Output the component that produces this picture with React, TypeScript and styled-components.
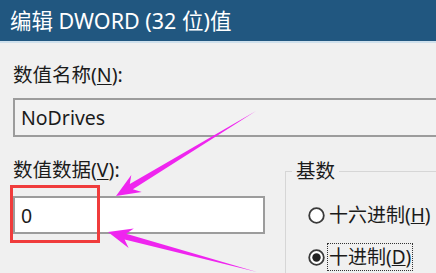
import React from 'react';
import styled, { createGlobalStyle } from 'styled-components';

const GlobalStyle = createGlobalStyle`
  html, body {
    margin: 0;
    padding: 0;
    background: #f0f0f0;
    overflow: hidden;
  }
`;

const Dialog = styled.div`
  position: relative;
  width: 436px;
  height: 273px;
  overflow: hidden;
  background: #f0f0f0;
  font-family: 'Noto Sans', 'Noto Sans CJK SC', sans-serif;
  color: #1b1b1b;
`;

const TitleBar = styled.div`
  height: 41px;
  display: flex;
  align-items: center;
  padding-left: 10px;
  background: #215780;
  color: #ffffff;
  font-size: 21.5px;
  line-height: 24px;
  white-space: nowrap;
  border-bottom: 2px solid #cfe0ec;
`;

const Content = styled.div`
  padding-left: 13px;
  width: 480px;
`;

const Label = styled.div<{ top: number }>`
  margin-top: ${p => p.top}px;
  font-size: 19.5px;
  line-height: 24px;
  white-space: nowrap;

  u {
    text-decoration: underline;
    text-underline-offset: 2px;
  }
`;

const TextField = styled.div<{ readOnly?: boolean; w: number; top: number }>`
  box-sizing: border-box;
  width: ${p => p.w}px;
  height: ${p => (p.readOnly ? 39 : 38)}px;
  margin-top: ${p => p.top}px;
  display: flex;
  align-items: center;
  padding-left: 6px;
  border: 2px solid #9c9c9c;
  background: ${p => (p.readOnly ? '#f2f2f2' : '#ffffff')};
  font-size: 19.5px;
  white-space: nowrap;
`;

const Row = styled.div`
  display: flex;
  align-items: flex-start;
`;

const Column = styled.div`
  display: flex;
  flex-direction: column;
`;

const GroupBox = styled.fieldset`
  margin: 24px 0 0 20px;
  padding: 0 0 20px 0;
  width: 200px;
  border: 1px solid #d6d6d6;
  border-right: none;
`;

const Legend = styled.legend`
  margin-left: 6px;
  padding: 0 4px;
  font-size: 19.5px;
  line-height: 20px;
`;

const RadioRow = styled.div<{ top: number }>`
  display: flex;
  align-items: center;
  gap: 2px;
  margin-top: ${p => p.top}px;
  margin-left: 22px;
  font-size: 19px;
  line-height: 24px;
  white-space: nowrap;
`;

const RadioIcon = styled.svg`
  flex: 0 0 17px;
  width: 17px;
  height: 17px;
`;

const RadioText = styled.span<{ focused?: boolean }>`
  padding: 1px 1px;
  border: 1.5px dotted ${p => (p.focused ? '#333333' : 'transparent')};
`;

const Highlight = styled.div`
  position: absolute;
  left: 10px;
  top: 185px;
  width: 90px;
  height: 58px;
  box-sizing: border-box;
  border: 3px solid #f03c3c;
`;

const Overlay = styled.svg`
  position: absolute;
  left: 0;
  top: 0;
`;

const Radio: React.FC<{ checked?: boolean }> = ({ checked }) => (
  <RadioIcon viewBox="0 0 17 17" width={17} height={17}>
    <circle cx="8.5" cy="8.5" r="7.3" fill="#ffffff" stroke="#3a3a3a" strokeWidth="1.8" />
    {checked && <circle cx="8.5" cy="8.5" r="4.2" fill="#222222" />}
  </RadioIcon>
);

const arrow = (px: number, py: number, tx: number, ty: number) => {
  const dx = px - tx;
  const dy = py - ty;
  const len = Math.hypot(dx, dy);
  const ux = -dx / len;
  const uy = -dy / len;
  const nx = -uy;
  const ny = ux;
  const pt = (a: number, b: number) =>
    `${(px + a * ux + b * nx).toFixed(1)},${(py + a * uy + b * ny).toFixed(1)}`;
  return [pt(0, 0), pt(24, 10), pt(18, 3), `${tx},${ty}`, pt(18, -3), pt(24, -10)].join(' ');
};

const App: React.FC = () => (
  <>
    <GlobalStyle />
    <Dialog>
      <TitleBar>编辑 DWORD (32 位)值</TitleBar>
      <Content>
        <Label top={20}>
          数值名称(<u>N</u>):
        </Label>
        <TextField readOnly w={460} top={11}>
          NoDrives
        </TextField>
        <Row>
          <Column>
            <Label top={21}>
              数值数据(<u>V</u>):
            </Label>
            <TextField w={252} top={14}>
              0
            </TextField>
          </Column>
          <GroupBox>
            <Legend>基数</Legend>
            <RadioRow top={20}>
              <Radio />
              <RadioText>十六进制(<u>H</u>)</RadioText>
            </RadioRow>
            <RadioRow top={14}>
              <Radio checked />
              <RadioText focused>十进制(<u>D</u>)</RadioText>
            </RadioRow>
          </GroupBox>
        </Row>
      </Content>
      <Highlight />
      <Overlay width={436} height={273} viewBox="0 0 436 273">
        <polygon points={arrow(116, 196, 256, 111)} fill="#ef25ef" />
        <polygon points={arrow(108, 232, 257, 272)} fill="#ef25ef" />
      </Overlay>
    </Dialog>
  </>
);

export default App;
